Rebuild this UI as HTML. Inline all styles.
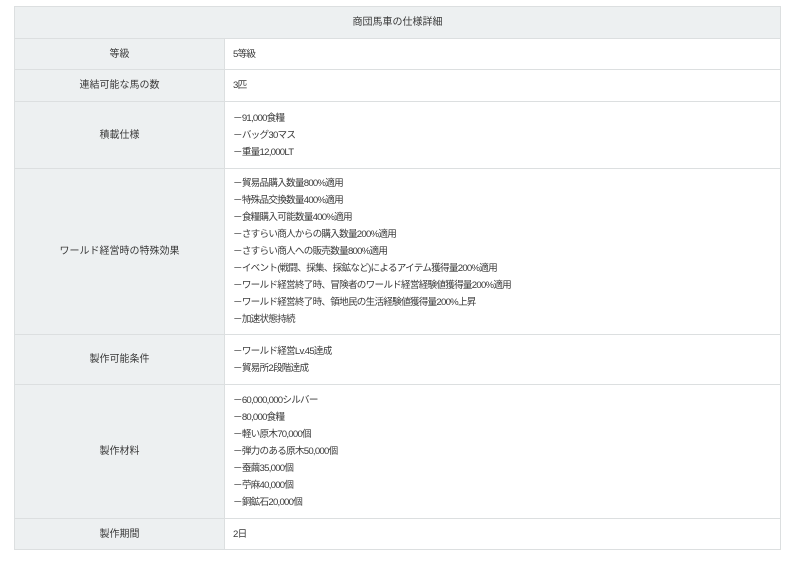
<!DOCTYPE html>
<html><head><meta charset="utf-8"><style>
body{margin:0;background:#fff;font-family:"Liberation Sans","Noto Sans CJK JP",sans-serif;color:#3a3a3a;font-size:10px;}
table{position:absolute;left:14px;top:6px;width:767px;border-collapse:collapse;table-layout:fixed;}
td,th{border:1px solid #dcdfe0;padding:0;line-height:17px;vertical-align:middle;}
th{background:#edf0f1;font-weight:normal;text-align:center;height:31px;}
td.k{background:#edf0f1;text-align:center;}
td.v{padding-left:8px;font-size:9.6px;letter-spacing:-0.75px;}
</style></head><body>
<table>
<colgroup><col style="width:210px"><col></colgroup>
<tr><th colspan="2">商団馬車の仕様詳細</th></tr>
<tr style="height:31px"><td class="k">等級</td><td class="v">5等級</td></tr>
<tr style="height:32px"><td class="k">連結可能な馬の数</td><td class="v">3匹</td></tr>
<tr style="height:67px"><td class="k">積載仕様</td><td class="v">－91,000食糧<br>－バッグ30マス<br>－重量12,000LT</td></tr>
<tr style="height:166px"><td class="k">ワールド経営時の特殊効果</td><td class="v">－貿易品購入数量800%適用<br>－特殊品交換数量400%適用<br>－食糧購入可能数量400%適用<br>－さすらい商人からの購入数量200%適用<br>－さすらい商人への販売数量800%適用<br>－イベント(戦闘、採集、採鉱など)によるアイテム獲得量200%適用<br>－ワールド経営終了時、冒険者のワールド経営経験値獲得量200%適用<br>－ワールド経営終了時、領地民の生活経験値獲得量200%上昇<br>－加速状態持続</td></tr>
<tr style="height:50px"><td class="k">製作可能条件</td><td class="v">－ワールド経営Lv.45達成<br>－貿易所2段階達成</td></tr>
<tr style="height:134px"><td class="k">製作材料</td><td class="v">－60,000,000シルバー<br>－80,000食糧<br>－軽い原木70,000個<br>－弾力のある原木50,000個<br>－蚕繭35,000個<br>－苧麻40,000個<br>－銅鉱石20,000個</td></tr>
<tr style="height:31px"><td class="k">製作期間</td><td class="v">2日</td></tr>
</table>
</body></html>
